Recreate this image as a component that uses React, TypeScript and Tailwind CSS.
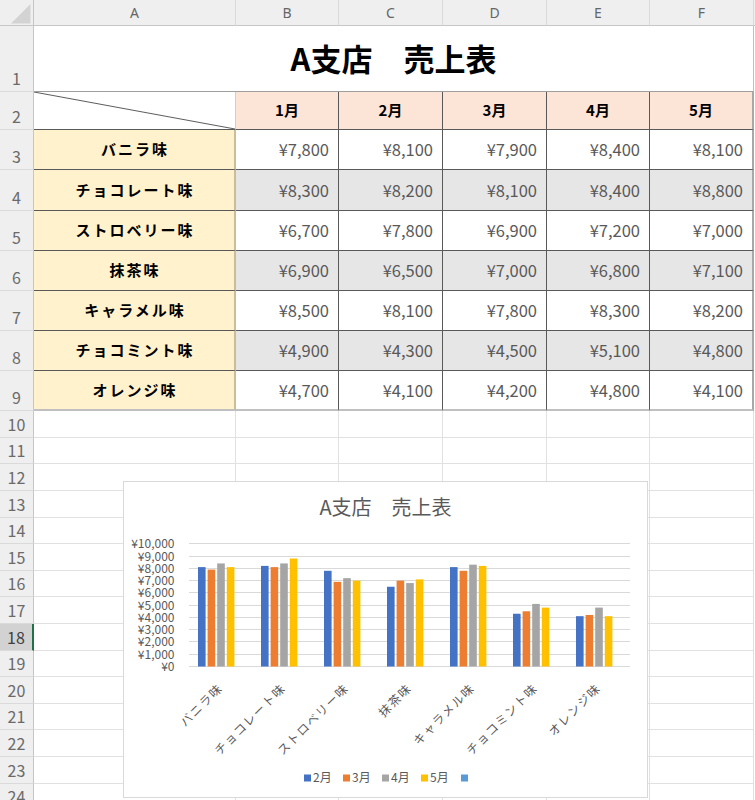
import React from "react";

const flavors: [string, number[]][] = [
  ["バニラ味", [7800, 8100, 7900, 8400, 8100]],
  ["チョコレート味", [8300, 8200, 8100, 8400, 8800]],
  ["ストロベリー味", [6700, 7800, 6900, 7200, 7000]],
  ["抹茶味", [6900, 6500, 7000, 6800, 7100]],
  ["キャラメル味", [8500, 8100, 7800, 8300, 8200]],
  ["チョコミント味", [4900, 4300, 4500, 5100, 4800]],
  ["オレンジ味", [4700, 4100, 4200, 4800, 4100]],
];

const months = ["1月", "2月", "3月", "4月", "5月"];
const letters = ["A", "B", "C", "D", "E", "F"];
const colW = ["w-[202px]", "w-[103px]", "w-[104px]", "w-[104px]", "w-[103px]", "w-[104px]"];
const dataW = ["w-[103px]", "w-[104px]", "w-[104px]", "w-[103px]", "w-[104px]"];
const tableRowH = ["h-[40px]", "h-[41px]", "h-[40px]", "h-[40px]", "h-[40px]", "h-[40px]", "h-[40px]"];
const emptyRowH = [
  "h-[27px]", "h-[26px]", "h-[27px]", "h-[27px]", "h-[26px]", "h-[27px]", "h-[26px]", "h-[27px]",
  "h-[27px]", "h-[26px]", "h-[27px]", "h-[26px]", "h-[27px]", "h-[27px]", "h-[26px]",
];

function yen(n: number) {
  if (n < 1000) return "¥" + n;
  return "¥" + Math.floor(n / 1000) + "," + String(n % 1000).padStart(3, "0");
}

function RowHead({ n, selected }: { n: number; selected?: boolean }) {
  return (
    <div
      className={`w-[34px] shrink-0 flex items-end justify-center pb-[3px] text-[16px] leading-[20px] border-b border-b-[#dadada] ${
        selected
          ? "bg-[#d2d2d2] text-[#404040] border-r-2 border-r-[#217346]"
          : "bg-[#efefef] text-[#6a6a6a] border-r border-r-[#c6c6c6]"
      }`}
    >
      {n}
    </div>
  );
}

function Chart() {
  const x0 = 65;
  const y0 = 184;
  const s = 122.7 / 10000;
  const cw = 63;
  const colors = ["#4472c4", "#ed7d31", "#a5a5a5", "#ffc000"];
  const legend = [
    { c: "#4472c4", t: "2月", x: 180 },
    { c: "#ed7d31", t: "3月", x: 219 },
    { c: "#a5a5a5", t: "4月", x: 258 },
    { c: "#ffc000", t: "5月", x: 297 },
  ];
  return (
    <div className="absolute left-[123px] top-[481px] w-[525px] h-[317px] bg-white border border-[#d9d9d9]">
      <svg width="523" height="315" className="block" fontFamily="'Noto Sans CJK JP', sans-serif">
        <text x="261.5" y="33" textAnchor="middle" fontSize="20" fill="#595959">
          A支店　売上表
        </text>
        {Array.from({ length: 11 }).map((_, k) => {
          const y = Math.round(y0 - k * 1000 * s) + 0.5;
          return (
            <g key={k}>
              <line x1={x0} x2={506} y1={y} y2={y} stroke="#d9d9d9" strokeWidth="1" />
              <text x="50.5" y={y + 4} textAnchor="end" fontSize="12" fill="#595959">
                {yen(k * 1000)}
              </text>
            </g>
          );
        })}
        {flavors.map(([name, vals], c) => (
          <g key={name}>
            {vals.slice(1).map((v, i) => {
              const h = v * s;
              return (
                <rect
                  key={i}
                  x={x0 + cw * c + 9 + 9.6 * i}
                  y={y0 + 0.5 - h}
                  width={7.6}
                  height={h}
                  fill={colors[i]}
                />
              );
            })}
            <text
              transform={`translate(${x0 + cw * c + 31.5 + 3},207) rotate(-45)`}
              textAnchor="end"
              fontSize="12"
              letterSpacing="1.5"
              fill="#595959"
            >
              {name}
            </text>
          </g>
        ))}
        {legend.map((l) => (
          <g key={l.t}>
            <rect x={l.x} y={292.5} width={7} height={7} fill={l.c} />
            <text x={l.x + 9} y={299.5} fontSize="12" fill="#595959">
              {l.t}
            </text>
          </g>
        ))}
        <rect x={337} y={292.5} width={7} height={7} fill="#5b9bd5" />
      </svg>
    </div>
  );
}

export default function App() {
  return (
    <div className="w-[755px] h-[800px] overflow-hidden bg-white relative font-['Noto_Sans_CJK_JP',sans-serif]">
      {/* column header */}
      <div className="flex h-[26px]">
        <div className="w-[34px] shrink-0 bg-[#efefef] border-r border-b border-[#c6c6c6] relative">
          <svg width="33" height="25" className="absolute left-0 top-0">
            <polygon points="30.5,4 30.5,23.5 11,23.5" fill="#d3d3d3" />
          </svg>
        </div>
        {letters.map((l, i) => (
          <div
            key={l}
            className={`${colW[i]} shrink-0 bg-[#efefef] border-r border-r-[#dadada] border-b border-b-[#c6c6c6] flex items-center justify-center text-[14px] text-[#666] font-['Noto_Sans',sans-serif]`}
          >
            {l}
          </div>
        ))}
        <div className="flex-1 bg-[#efefef] border-b border-b-[#c6c6c6]" />
      </div>

      {/* row 1 */}
      <div className="flex h-[66px]">
        <RowHead n={1} />
        <div className="w-[720px] shrink-0 border-b border-b-[#9e9e9e] border-r border-r-[#c0c0c0] flex items-center justify-center text-[31px] font-bold text-black">
          A支店　売上表
        </div>
      </div>

      {/* row 2 */}
      <div className="flex h-[38px]">
        <RowHead n={2} />
        <div className="w-[202px] shrink-0 relative border-b border-b-[#595959] border-r border-r-[#cfcfcf]">
          <svg className="absolute inset-0" width="201" height="37" viewBox="0 0 201 37" preserveAspectRatio="none">
            <line x1="0" y1="0" x2="201" y2="37" stroke="#4a4a4a" strokeWidth="0.9" />
          </svg>
        </div>
        {months.map((m, i) => (
          <div
            key={m}
            className={`${dataW[i]} shrink-0 bg-[#fce4d6] border-b border-b-[#595959] flex items-center justify-center text-[15px] font-bold text-black ${
              i === 4 ? "border-r-2 border-r-[#a8a8a8]" : "border-r border-r-[#595959]"
            }`}
          >
            {m}
          </div>
        ))}
      </div>

      {/* rows 3-9 */}
      {flavors.map(([name, vals], r) => {
        const last = r === 6;
        const shaded = r % 2 === 1;
        const bottom = last ? "border-b-2 border-b-[#c0c0c0]" : "border-b border-b-[#595959]";
        return (
          <div key={name} className={`flex ${tableRowH[r]}`}>
            <RowHead n={r + 3} />
            <div
              className={`w-[202px] shrink-0 bg-[#fff2cc] border-r-2 border-r-[#cbbd97] ${bottom} flex items-center justify-center pl-[2px] text-[15px] tracking-[2px] font-bold text-black`}
            >
              {name}
            </div>
            {vals.map((v, i) => (
              <div
                key={i}
                className={`${dataW[i]} shrink-0 ${shaded ? "bg-[#e7e6e6]" : "bg-white"} ${bottom} ${
                  i === 4 ? "border-r-2 border-r-[#a8a8a8]" : "border-r border-r-[#595959]"
                } flex items-center justify-end pr-[9px] text-[16.5px] text-[#595959]`}
              >
                {yen(v)}
              </div>
            ))}
          </div>
        );
      })}

      {/* rows 10-24 */}
      {emptyRowH.map((h, k) => (
        <div key={k} className={`flex ${h}`}>
          <RowHead n={k + 10} selected={k + 10 === 18} />
          {colW.map((w, i) => (
            <div key={i} className={`${w} shrink-0 border-r border-b border-[#e1e1e1]`} />
          ))}
        </div>
      ))}

      <Chart />
    </div>
  );
}
